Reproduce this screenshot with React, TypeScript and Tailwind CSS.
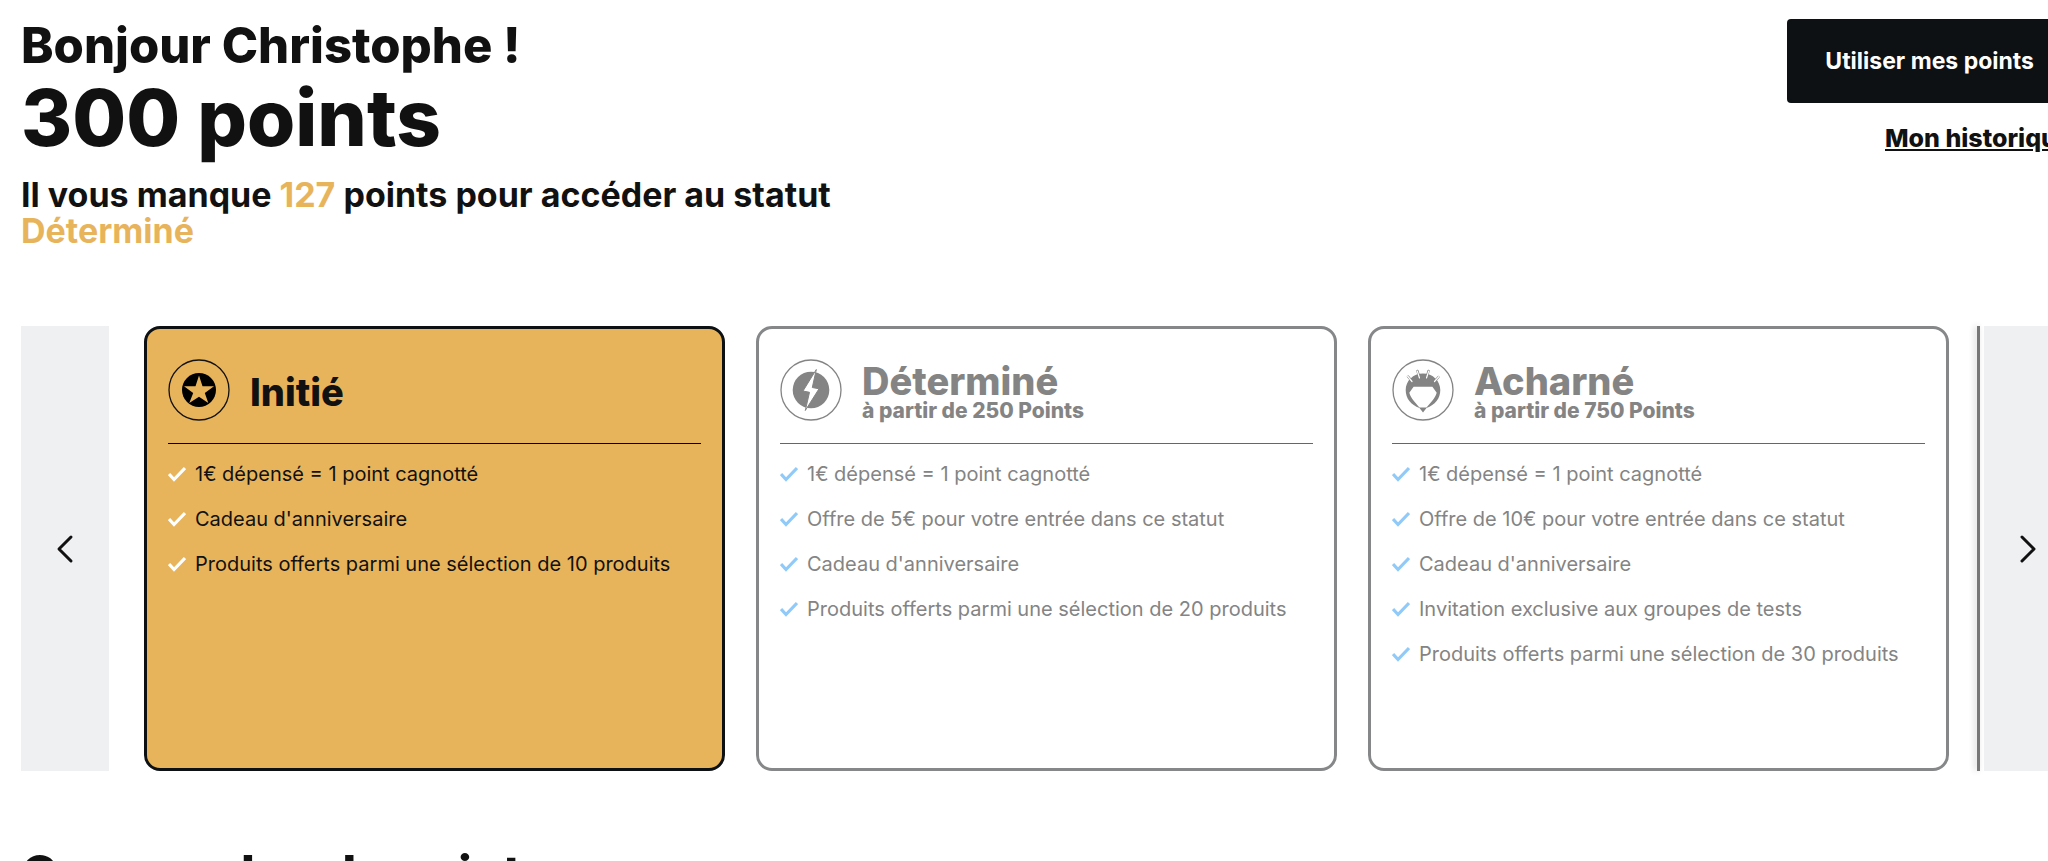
import { ChevronLeft, ChevronRight } from "lucide-react";
import type { ReactNode } from "react";

type Tier = {
  name: string;
  threshold?: string;
  icon: ReactNode;
  perks: string[];
  active?: boolean;
};

const StarIcon = () => (
  <svg viewBox="0 0 62 62" className="size-[62px] shrink-0" aria-hidden="true">
    <circle cx="31" cy="31" r="30" fill="none" stroke="currentColor" strokeWidth="1.3" />
    <circle cx="31" cy="31" r="17" fill="#000" />
    <path
      fill="#e8b45b"
      d="M31 16.5L34.5 27.2H46L36.800 34L40.300 44L31 37.800L21.300 44L25.200 34L16 27.200H27.500Z"
    />
  </svg>
);

const BoltIcon = () => (
  <svg viewBox="0 0 62 62" className="size-[62px] shrink-0" aria-hidden="true">
    <circle cx="31" cy="31" r="30" fill="none" stroke="currentColor" strokeWidth="1.3" />
    <circle cx="31" cy="31" r="18.300" fill="currentColor" />
    <path
      d="M36.300 10.500L23 32L29.500 33.300L25.300 51.500L39 29.800L32.300 28.500Z"
      fill="#fff"
      stroke="currentColor"
      strokeWidth="1"
    />
  </svg>
);

const StrawberryIcon = () => (
  <svg viewBox="0 0 62 62" className="size-[62px] shrink-0" aria-hidden="true">
    <circle cx="31" cy="31" r="30" fill="none" stroke="currentColor" strokeWidth="1.3" />
    <path
      fill="currentColor"
      d="M31 14.500C21 14.500 13.700 22 13.700 31C13.700 39.500 19 46 27.500 49L31 53.500L34.500 49C43 46 48.300 39.500 48.300 31C48.300 22 41 14.500 31 14.500Z"
    />
    <path fill="#fff" d="M21.600 27.700H40.400L44.700 33.700C43 40 38 44 34.500 48.500H27.500C24 44 19 40 17.300 33.700Z" />
    <g strokeLinecap="round">
      <path
        d="M16 17.500L20.500 23M25.500 12L27.700 19.500M36.500 12L34.300 19.500M46.500 18L42 23"
        stroke="currentColor"
        strokeWidth="2.4"
      />
      <path
        d="M15.500 17L20 22.500M25.300 12L27.500 19M36.700 12L34.500 19M47 17.500L42.500 22.500"
        stroke="#fff"
        strokeWidth="1.2"
      />
    </g>
  </svg>
);

const TIERS: Tier[] = [
  {
    name: "Initié",
    icon: <StarIcon />,
    active: true,
    perks: [
      "1€ dépensé = 1 point cagnotté",
      "Cadeau d'anniversaire",
      "Produits offerts parmi une sélection de 10 produits",
    ],
  },
  {
    name: "Déterminé",
    threshold: "à partir de 250 Points",
    icon: <BoltIcon />,
    perks: [
      "1€ dépensé = 1 point cagnotté",
      "Offre de 5€ pour votre entrée dans ce statut",
      "Cadeau d'anniversaire",
      "Produits offerts parmi une sélection de 20 produits",
    ],
  },
  {
    name: "Acharné",
    threshold: "à partir de 750 Points",
    icon: <StrawberryIcon />,
    perks: [
      "1€ dépensé = 1 point cagnotté",
      "Offre de 10€ pour votre entrée dans ce statut",
      "Cadeau d'anniversaire",
      "Invitation exclusive aux groupes de tests",
      "Produits offerts parmi une sélection de 30 produits",
    ],
  },
];

function TierCard({ tier }: { tier: Tier }) {
  return (
    <article
      className={`min-w-0 flex-1 rounded-2xl border-3 px-[21px] pt-[30px] ${
        tier.active
          ? "border-[#0d1114] bg-[#e8b45b] text-[#111]"
          : "border-[#868789] bg-white text-[#848484]"
      }`}
    >
      <header className={`flex h-[85px] gap-5 border-b ${tier.active ? "border-black" : "border-[#666]"}`}>
        {tier.icon}
        <div className="flex h-[66px] flex-col justify-center font-extrabold">
          <h2 className="text-[38px] leading-[38px]">{tier.name}</h2>
          {tier.threshold && <p className="text-[21px] leading-[22px]">{tier.threshold}</p>}
        </div>
      </header>
      <ul className="pt-[7px]">
        {tier.perks.map((perk) => (
          <li key={perk} className="flex h-[45px] items-center gap-[9px] text-[20px] whitespace-nowrap">
            <svg
              viewBox="0 0 18 16"
              className={`h-4 w-[18px] shrink-0 ${tier.active ? "text-white" : "text-[#90caf9]"}`}
              aria-hidden="true"
            >
              <path d="M1 8L6 13.500L17 2" fill="none" stroke="currentColor" strokeWidth="3.2" />
            </svg>
            {perk}
          </li>
        ))}
      </ul>
    </article>
  );
}

export default function App() {
  return (
    <div className="overflow-hidden bg-white font-['Inter',sans-serif] text-[#111]">
      <main className="-mr-6 pl-[21px]">
        <section className="flex items-start justify-between pt-[19px]">
          <div className="max-w-[860px]">
            <h1 className="font-extrabold">
              <span className="block text-[49px] leading-[54px]">Bonjour Christophe !</span>
              <span className="block text-[78px] leading-[90px]">300 points</span>
            </h1>
            <p className="pt-3.5 text-[34px] leading-[36px] font-bold">
              Il vous manque <span className="text-[#e8b45b]">127</span> points pour accéder au statut{" "}
              <span className="block text-[#e8b45b]">Déterminé</span>
            </p>
          </div>
          <div className="flex flex-col items-end gap-5">
            <button type="button" className="h-[84px] rounded bg-[#0d1114] px-[38px] text-[23px] font-bold text-white">
              Utiliser mes points
            </button>
            <a href="#historique" className="text-[25px] leading-[30px] font-extrabold underline decoration-2 underline-offset-2">
              Mon historique
            </a>
          </div>
        </section>

        <section className="mt-[77px] flex min-h-[445px]">
          <button type="button" aria-label="Précédent" className="flex w-[88px] shrink-0 items-center justify-center bg-[#eff0f2]">
            <ChevronLeft className="size-12" strokeWidth={1.5} />
          </button>
          <div className="ml-[35px] flex flex-1 gap-[31px] pr-7">
            {TIERS.map((tier) => (
              <TierCard key={tier.name} tier={tier} />
            ))}
          </div>
          <div className="mr-1 w-[3px] bg-[#777] shadow-[-2px_0_6px_rgba(0,0,0,0.2)]" />
          <button type="button" aria-label="Suivant" className="flex w-[88px] shrink-0 items-center justify-center bg-[#eff0f2]">
            <ChevronRight className="size-12" strokeWidth={1.5} />
          </button>
        </section>

        <section className="h-[90px] overflow-hidden pt-[76px]">
          <h2 className="text-[49px] leading-[54px] font-extrabold">Gagner plus de points</h2>
        </section>
      </main>
    </div>
  );
}
